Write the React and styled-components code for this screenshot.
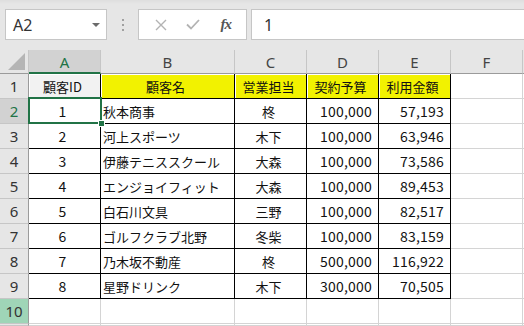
import React from "react"
import styled, { createGlobalStyle } from "styled-components"

const GlobalStyle = createGlobalStyle`
  html, body {
    margin: 0;
    padding: 0;
    background: #e6e6e6;
    overflow: hidden;
  }
  body {
    width: 524px;
    height: 326px;
  }
`

const GREEN = "#217346"
const GRID = "#d4d4d4"

const Window = styled.div`
  width: 524px;
  height: 326px;
  background: #e6e6e6;
  display: flex;
  flex-direction: column;
  overflow: hidden;
  font-family: "Noto Sans", "Open Sans", sans-serif;
`

const FormulaBar = styled.div`
  height: 50px;
  box-sizing: border-box;
  padding: 9px 0 10px 5px;
  display: flex;
  align-items: stretch;
  background: linear-gradient(#dedede 0px, #e6e6e6 4px);
`

const NameBox = styled.div`
  width: 102px;
  box-sizing: border-box;
  background: #fff;
  border: 1px solid #c6c6c6;
  display: flex;
  align-items: center;
  justify-content: space-between;
  padding: 0 6px 0 7px;
  font-size: 16px;
  color: #333;
`

const Caret = styled.span`
  width: 0;
  height: 0;
  border-left: 4px solid transparent;
  border-right: 4px solid transparent;
  border-top: 4px solid #6b6b6b;
  margin-top: 1px;
`

const Grip = styled.div`
  width: 31px;
  display: flex;
  flex-direction: column;
  align-items: center;
  justify-content: center;
  gap: 3px;

  span {
    width: 2px;
    height: 2px;
    background: #a0a0a0;
  }
`

const ButtonBox = styled.div`
  width: 109px;
  box-sizing: border-box;
  background: #fff;
  border: 1px solid #c6c6c6;
  display: flex;
  align-items: center;
  justify-content: space-around;
  padding: 0 4px 0 6px;
`

const IconBtn = styled.span`
  width: 28px;
  display: flex;
  align-items: center;
  justify-content: center;
`

const Fx = styled.span`
  font-family: "Liberation Serif", "DejaVu Serif", serif;
  font-style: italic;
  font-size: 15px;
  font-weight: bold;
  color: #555;
  letter-spacing: -1px;
`

const FormulaInput = styled.div`
  flex: 1;
  margin-left: 4px;
  background: #fff;
  border: 1px solid #c6c6c6;
  border-right: none;
  display: flex;
  align-items: center;
  padding-left: 12px;
  font-size: 16px;
  color: #333;
`

const Sheet = styled.div`
  position: relative;
  flex: 1;
  display: grid;
  grid-template-columns: 29px 72px 134px 72px 72px 72px 72px 1fr;
  grid-template-rows: 24px repeat(10, 25px) 1fr;
  background: #fff;
`

const Corner = styled.div`
  background: #e6e6e6;
  border-right: 1px solid #c6c6c6;
  border-bottom: 1px solid #9b9b9b;
  position: relative;

  &::after {
    content: "";
    position: absolute;
    right: 3px;
    bottom: 3px;
    width: 0;
    height: 0;
    border-left: 17px solid transparent;
    border-bottom: 17px solid #b5b5b5;
  }
`

const ColHead = styled.div`
  box-sizing: border-box;
  background: ${p => (p.$active ? "#d2d2d2" : "#e6e6e6")};
  border-right: 1px solid #c6c6c6;
  border-bottom: ${p => (p.$active ? `2px solid ${GREEN}` : "1px solid #9b9b9b")};
  display: flex;
  align-items: center;
  justify-content: center;
  padding-top: ${p => (p.$active ? "1px" : "0")};
  font-size: 15px;
  color: ${p => (p.$active ? GREEN : "#444")};
`

const RowHead = styled.div`
  box-sizing: border-box;
  background: ${p => (p.$active ? "#d2d2d2" : p.$hover ? "#9fd5b7" : "#e6e6e6")};
  border-right: 1px solid #9b9b9b;
  border-bottom: 1px solid #c6c6c6;
  display: flex;
  align-items: center;
  justify-content: center;
  font-size: 15px;
  color: ${p => (p.$active ? GREEN : "#333")};
`

const Cell = styled.div`
  box-sizing: border-box;
  border-right: 1px solid ${p => (p.$edgeR ? "#000" : GRID)};
  border-bottom: 1px solid ${p => (p.$edgeB ? "#000" : GRID)};
  background: ${p => p.$fill || "#fff"};
  box-shadow: ${p => (p.$fill ? "inset 1px 1px 0 #fff" : "none")};
  display: flex;
  align-items: center;
  justify-content: ${p =>
    p.$align === "center" ? "center" : p.$align === "right" ? "flex-end" : "flex-start"};
  padding: 0 6px 0 2px;
  font-family: "Noto Sans CJK JP", "Noto Sans", sans-serif;
  font-size: 13px;
  color: #111;
  white-space: nowrap;
  overflow: hidden;
`

const Num = styled.span`
  font-size: 14px;
  letter-spacing: 0.2px;
`

const Selection = styled.div`
  position: absolute;
  left: 28px;
  top: 47px;
  width: 74px;
  height: 27px;
  box-sizing: border-box;
  border: 2px solid ${GREEN};
  pointer-events: none;

  &::after {
    content: "";
    position: absolute;
    right: -5px;
    bottom: -5px;
    width: 5px;
    height: 5px;
    background: ${GREEN};
    border: 1px solid #fff;
  }
`

const columns = ["A", "B", "C", "D", "E", "F"]
const aligns = ["center", "left", "center", "right", "right", "left"]

const header = ["顧客ID", "顧客名", "営業担当", "契約予算", "利用金額"]

const rows = [
  ["1", "秋本商事", "柊", "100,000", "57,193"],
  ["2", "河上スポーツ", "木下", "100,000", "63,946"],
  ["3", "伊藤テニススクール", "大森", "100,000", "73,586"],
  ["4", "エンジョイフィット", "大森", "100,000", "89,453"],
  ["5", "白石川文具", "三野", "100,000", "82,517"],
  ["6", "ゴルフクラブ北野", "冬柴", "100,000", "83,159"],
  ["7", "乃木坂不動産", "柊", "500,000", "116,922"],
  ["8", "星野ドリンク", "木下", "300,000", "70,505"],
]

const CrossIcon = () => (
  <svg width="12" height="12" viewBox="0 0 12 12">
    <path d="M1 1 L11 11 M11 1 L1 11" stroke="#b3b3b3" strokeWidth="1.4" fill="none" />
  </svg>
)

const CheckIcon = () => (
  <svg width="14" height="11" viewBox="0 0 14 11">
    <path d="M1 5.5 L5 9.5 L13 1" stroke="#b3b3b3" strokeWidth="1.8" fill="none" />
  </svg>
)

const renderRow = (values, r) => {
  const isHeader = r === 1
  return columns.map((c, ci) => {
    const inTable = ci < 5
    const v = values ? values[ci] : ""
    const isNum = !isHeader && (ci === 0 || ci === 3 || ci === 4)
    let fill
    if (isHeader && ci === 0) fill = "#f2f2f2"
    if (isHeader && ci > 0 && ci < 5) fill = "#f2f200"
    return (
      <Cell
        key={c + r}
        $align={isHeader ? "center" : aligns[ci]}
        $edgeR={inTable && r <= 9}
        $edgeB={inTable && r <= 9}
        $fill={fill}
      >
        {inTable && v ? isNum ? <Num>{v}</Num> : v : null}
      </Cell>
    )
  })
}

const App = () => {
  const allRows = [header, ...rows, null]
  return (
    <>
      <GlobalStyle />
      <Window>
        <FormulaBar>
          <NameBox>
            A2
            <Caret />
          </NameBox>
          <Grip>
            <span />
            <span />
            <span />
          </Grip>
          <ButtonBox>
            <IconBtn>
              <CrossIcon />
            </IconBtn>
            <IconBtn>
              <CheckIcon />
            </IconBtn>
            <IconBtn>
              <Fx>fx</Fx>
            </IconBtn>
          </ButtonBox>
          <FormulaInput>1</FormulaInput>
        </FormulaBar>

        <Sheet>
          <Corner />
          {columns.map(c => (
            <ColHead key={c} $active={c === "A"}>
              {c}
            </ColHead>
          ))}
          <ColHead />

          {allRows.map((values, i) => {
            const r = i + 1
            return (
              <React.Fragment key={r}>
                <RowHead $active={r === 2} $hover={r === 10}>
                  {r}
                </RowHead>
                {renderRow(values, r)}
                <Cell />
              </React.Fragment>
            )
          })}

          <RowHead />
          {columns.map(c => (
            <Cell key={"x" + c} />
          ))}
          <Cell />

          <Selection />
        </Sheet>
      </Window>
    </>
  )
}

export default App
